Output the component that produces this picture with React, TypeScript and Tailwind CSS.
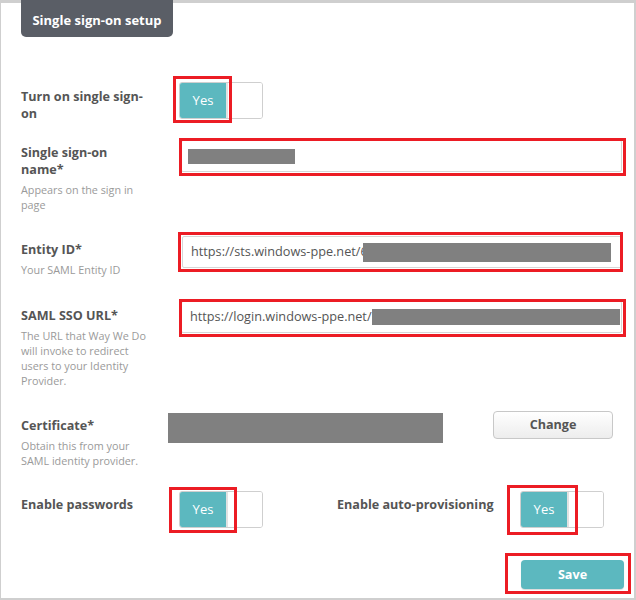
import { ReactNode } from 'react'

const RedBox = ({ className }: { className: string }) => (
  <span className={`pointer-events-none absolute border-[3px] border-[#ec1c24] ${className}`} />
)

const Toggle = () => (
  <div className="flex h-[37px] w-[84px] overflow-hidden rounded-[3px] border border-[#cfcfcf] bg-white">
    <div className="flex w-[46px] items-center justify-center bg-[#5cb8bf] pt-[1px] text-[13px] text-white">Yes</div>
    <div className="w-[2px] bg-[#e2e2e2]" />
    <div className="flex-1 bg-white" />
  </div>
)

const Label = ({ title, hint, pt }: { title: string; hint?: ReactNode; pt: string }) => (
  <div className={`w-[158px] shrink-0 ${pt}`}>
    <div className="max-w-[128px] text-[12.6px] leading-[17px] font-bold text-[#555]">{title}</div>
    {hint ? <div className="mt-[4px] max-w-[128px] text-[10.8px] leading-[15px] text-[#9a9a9a]">{hint}</div> : null}
  </div>
)

export default function App() {
  return (
    <div className="h-[600px] w-[636px] border-t-[3px] border-r-2 border-b-2 border-l border-[#cfcfcf] bg-white pr-[10px] pl-[20px] font-['Open_Sans',sans-serif]">
      <div className="-mt-[3px] flex h-[37px] w-[152px] items-center justify-center rounded-b-[5px] bg-[#5a5e66] pt-[4px] text-[13px] font-bold text-white">
        Single sign-on setup
      </div>

      {/* Turn on SSO */}
      <div className="mt-[45px] flex h-[58px]">
        <Label title="Turn on single sign-on" pt="pt-[6px]" />
        <div className="relative h-[37px]">
          <Toggle />
          <RedBox className="-top-[6px] -left-[6px] h-[47px] w-[59px]" />
        </div>
      </div>

      {/* Name */}
      <div className="flex h-[96px]">
        <Label title="Single sign-on name*" hint="Appears on the sign in page" pt="pt-[4px]" />
        <div className="relative ml-[2px] h-[32px] w-[441px] rounded-[2px] border border-[#d6d6d6] px-[6px] py-[8px]">
          <div className="h-[15px] w-[107px] bg-[#808080]" />
          <RedBox className="-top-[3px] -left-[3px] h-[38px] w-[447px]" />
        </div>
      </div>

      {/* Entity ID */}
      <div className="flex h-[65px]">
        <Label title="Entity ID*" hint="Your SAML Entity ID" pt="pt-[5px]" />
        <div className="relative ml-[3px] h-[32px] w-[440px]">
          <div className="flex h-full items-center overflow-hidden rounded-[2px] border border-[#d6d6d6] pl-[8px] text-[12.7px] text-[#555]">
            <span className="whitespace-nowrap">https://sts.windows-ppe.net/6</span>
            <span className="-ml-[5px] inline-block h-[19px] w-[248px] shrink-0 bg-[#808080]" />
          </div>
          <RedBox className="-top-[4px] -left-[4px] h-[40px] w-[445px]" />
        </div>
      </div>

      {/* SAML SSO URL */}
      <div className="flex h-[110px]">
        <Label
          title="SAML SSO URL*"
          hint="The URL that Way We Do will invoke to redirect users to your Identity Provider."
          pt="pt-[6px]"
        />
        <div className="relative ml-[2px] flex h-[32px] w-[441px] items-center rounded-[2px] border border-[#d6d6d6] pl-[8px] text-[12.7px] text-[#555]">
          <span className="whitespace-nowrap">https://login.windows-ppe.net/</span>
          <span className="inline-block h-[16px] w-[248px] shrink-0 bg-[#808080]" />
          <RedBox className="-top-[3px] -left-[3px] h-[38px] w-[447px]" />
        </div>
      </div>

      {/* Certificate */}
      <div className="flex h-[80px]">
        <Label title="Certificate*" hint="Obtain this from your SAML identity provider." pt="pt-[6px]" />
        <div className="-ml-[11px] mt-[2px] h-[30px] w-[275px] bg-[#808080]" />
        <button
          type="button"
          className="ml-[50px] h-[28px] w-[120px] rounded-[4px] border border-[#c8c8c8] bg-gradient-to-b from-white to-[#ededed] pt-[1px] text-[12.6px] font-bold text-[#555]"
        >
          Change
        </button>
      </div>

      {/* Enable toggles */}
      <div className="flex h-[69px]">
        <Label title="Enable passwords" pt="pt-[5px]" />
        <div className="relative h-[37px]">
          <Toggle />
          <RedBox className="-top-[4px] -left-[10px] h-[46px] w-[68px]" />
        </div>
        <div className="ml-[74px] w-[157px] shrink-0 pt-[5px] text-[12.6px] leading-[17px] font-bold whitespace-nowrap text-[#555]">
          Enable auto-provisioning
        </div>
        <div className="relative ml-[26px] h-[37px]">
          <Toggle />
          <RedBox className="-top-[6px] -left-[13px] h-[50px] w-[71px]" />
        </div>
      </div>

      {/* Save */}
      <div className="flex justify-end">
        <div className="relative">
          <button
            type="button"
            className="h-[29px] w-[103px] rounded-[4px] bg-[#5cb8bf] pt-[2px] text-[12.6px] font-bold text-white shadow-[0_1px_1px_rgba(0,0,0,0.15)]"
          >
            Save
          </button>
          <RedBox className="-top-[7px] -left-[16px] h-[41px] w-[126px]" />
        </div>
      </div>
    </div>
  )
}
